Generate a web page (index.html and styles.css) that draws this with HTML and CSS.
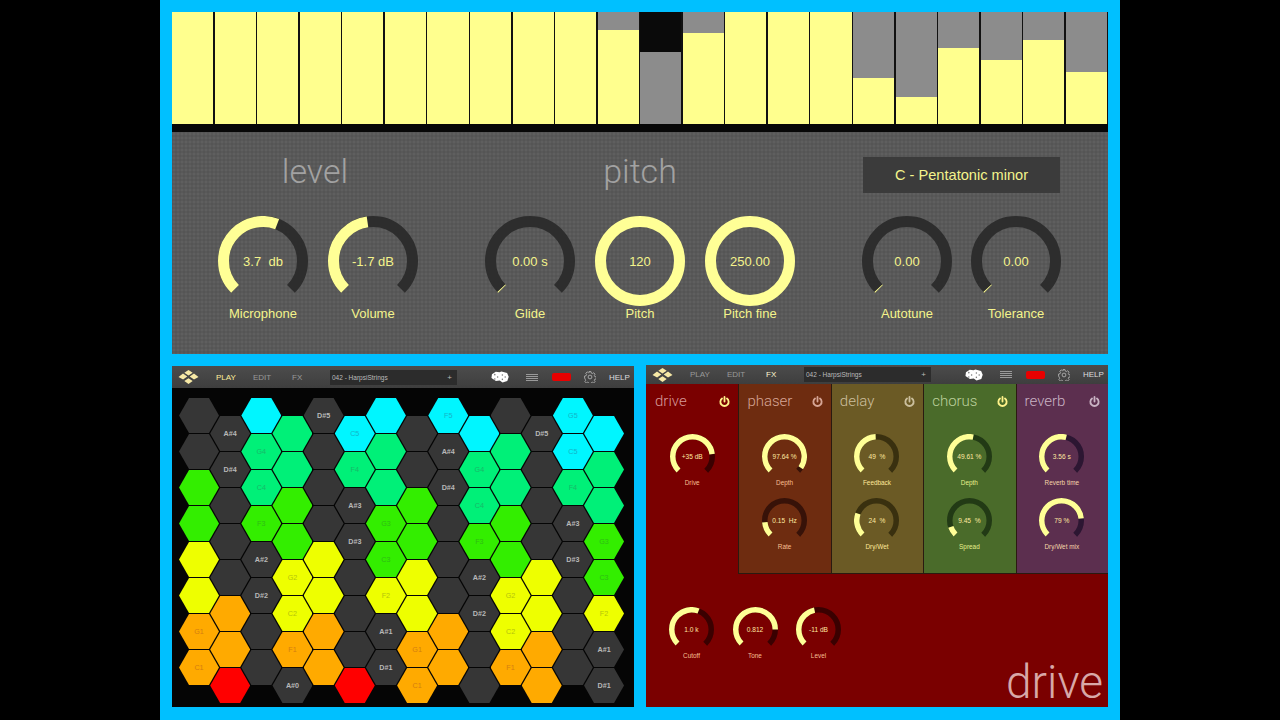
FILE: index.html
```html
<!DOCTYPE html>
<html lang="en">
<head>
    <meta charset="UTF-8">
    <title>Synth Controls</title>
    <link rel="stylesheet" href="styles.css">
</head>
<body>
    <svg class="sprites" aria-hidden="true">
        <symbol id="logo" viewBox="0 0 21 14">
            <path d="M10.5 0l4.2 2.8-4.2 2.8-4.2-2.8zM5 3.6l4.3 3-4.2 3L.5 7zM16 3.6L20.5 7 16 9.6l-4.3-3zM10.5 8.2l4.2 2.9-4.2 2.9-4.2-2.9z"/>
        </symbol>
        <symbol id="dice" viewBox="0 0 19 12">
            <path fill="#fff" d="M1 3l4-2.500 4 .5 2-.8 6 1.500 1.700 4-1.500 4.500-5 1.500-3-2-4 .5L.5 7z"/>
            <g fill="#777"><circle cx="4" cy="3.500" r=".8"/><circle cx="7" cy="6" r=".8"/><circle cx="4" cy="8" r=".8"/><circle cx="12" cy="4" r=".8"/><circle cx="15" cy="6" r=".8"/><circle cx="12" cy="8.500" r=".8"/></g>
        </symbol>
        <symbol id="gear" viewBox="0 0 12 12">
            <circle cx="6" cy="6" r="1.900" fill="none" stroke="#bbb" stroke-width=".8"/>
            <path fill="none" stroke="#bbb" stroke-width=".8" d="M5 .6h2l.3 1.500 1.100.5 1.300-.8 1.400 1.400-.8 1.300.5 1.100 1.500.3v2l-1.500.3-.5 1.100.8 1.300-1.400 1.400-1.300-.8-1.100.5-.3 1.500H5l-.3-1.500-1.100-.5-1.300.8-1.400-1.400.8-1.300-.5-1.100L.6 7V5l1.500-.3.5-1.100-.8-1.300 1.400-1.400 1.300.8 1.100-.5z"/>
        </symbol>
        <symbol id="power" viewBox="0 0 12 12">
            <path fill="none" stroke="currentColor" stroke-width="2" stroke-linecap="round" d="M3.300 2.800a4.500 4.500 0 1 0 5.400 0M6 1v5"/>
        </symbol>
    </svg>

    <div class="frame">
        <!-- Top: pitch bars and level controls -->
        <section class="tuner">
            <div class="bars">
                <div class="bar"><div class="fill" style="height:100%"></div></div>
                <div class="bar"><div class="fill" style="height:100%"></div></div>
                <div class="bar"><div class="fill" style="height:100%"></div></div>
                <div class="bar"><div class="fill" style="height:100%"></div></div>
                <div class="bar"><div class="fill" style="height:100%"></div></div>
                <div class="bar"><div class="fill" style="height:100%"></div></div>
                <div class="bar"><div class="fill" style="height:100%"></div></div>
                <div class="bar"><div class="fill" style="height:100%"></div></div>
                <div class="bar"><div class="fill" style="height:100%"></div></div>
                <div class="bar"><div class="fill" style="height:100%"></div></div>
                <div class="bar"><div class="fill" style="height:84%"></div></div>
                <div class="bar bar-muted"><div class="fill" style="height:64%"></div></div>
                <div class="bar"><div class="fill" style="height:81%"></div></div>
                <div class="bar"><div class="fill" style="height:100%"></div></div>
                <div class="bar"><div class="fill" style="height:100%"></div></div>
                <div class="bar"><div class="fill" style="height:100%"></div></div>
                <div class="bar"><div class="fill" style="height:41%"></div></div>
                <div class="bar"><div class="fill" style="height:24%"></div></div>
                <div class="bar"><div class="fill" style="height:68%"></div></div>
                <div class="bar"><div class="fill" style="height:57%"></div></div>
                <div class="bar"><div class="fill" style="height:75%"></div></div>
                <div class="bar"><div class="fill" style="height:46%"></div></div>
            </div>
            <div class="bars-base"></div>

            <div class="controls">
                <div class="group group-level">
                    <div class="group-head"><h2>level</h2></div>
                    <div class="knobs">
                        <div class="knob">
                            <div class="dial">
                                <svg viewBox="0 0 90 90"><circle class="track" cx="45" cy="45" r="39.500" pathLength="360" stroke-dasharray="270 360" transform="rotate(135 45 45)"/><circle class="value" cx="45" cy="45" r="39.500" pathLength="360" stroke-dasharray="156 360" transform="rotate(135 45 45)"/></svg>
                                <span class="readout">3.7  db</span>
                            </div>
                            <span class="label">Microphone</span>
                        </div>
                        <div class="knob">
                            <div class="dial">
                                <svg viewBox="0 0 90 90"><circle class="track" cx="45" cy="45" r="39.500" pathLength="360" stroke-dasharray="270 360" transform="rotate(135 45 45)"/><circle class="value" cx="45" cy="45" r="39.500" pathLength="360" stroke-dasharray="127 360" transform="rotate(135 45 45)"/></svg>
                                <span class="readout">-1.7 dB</span>
                            </div>
                            <span class="label">Volume</span>
                        </div>
                    </div>
                </div>

                <div class="group group-pitch">
                    <div class="group-head"><h2>pitch</h2></div>
                    <div class="knobs">
                        <div class="knob">
                            <div class="dial">
                                <svg viewBox="0 0 90 90"><circle class="track" cx="45" cy="45" r="39.500" pathLength="360" stroke-dasharray="270 360" transform="rotate(135 45 45)"/><circle class="value" cx="45" cy="45" r="39.500" pathLength="360" stroke-dasharray="1.500 360" transform="rotate(135 45 45)"/></svg>
                                <span class="readout">0.00 s</span>
                            </div>
                            <span class="label">Glide</span>
                        </div>
                        <div class="knob">
                            <div class="dial">
                                <svg viewBox="0 0 90 90"><circle class="value" cx="45" cy="45" r="39.500"/></svg>
                                <span class="readout">120</span>
                            </div>
                            <span class="label">Pitch</span>
                        </div>
                        <div class="knob">
                            <div class="dial">
                                <svg viewBox="0 0 90 90"><circle class="value" cx="45" cy="45" r="39.500"/></svg>
                                <span class="readout">250.00</span>
                            </div>
                            <span class="label">Pitch fine</span>
                        </div>
                    </div>
                </div>

                <div class="group group-scale">
                    <div class="group-head"><div class="scale-box">C - Pentatonic minor</div></div>
                    <div class="knobs">
                        <div class="knob">
                            <div class="dial">
                                <svg viewBox="0 0 90 90"><circle class="track" cx="45" cy="45" r="39.500" pathLength="360" stroke-dasharray="270 360" transform="rotate(135 45 45)"/><circle class="value" cx="45" cy="45" r="39.500" pathLength="360" stroke-dasharray="1.500 360" transform="rotate(135 45 45)"/></svg>
                                <span class="readout">0.00</span>
                            </div>
                            <span class="label">Autotune</span>
                        </div>
                        <div class="knob">
                            <div class="dial">
                                <svg viewBox="0 0 90 90"><circle class="track" cx="45" cy="45" r="39.500" pathLength="360" stroke-dasharray="270 360" transform="rotate(135 45 45)"/><circle class="value" cx="45" cy="45" r="39.500" pathLength="360" stroke-dasharray="1.500 360" transform="rotate(135 45 45)"/></svg>
                                <span class="readout">0.00</span>
                            </div>
                            <span class="label">Tolerance</span>
                        </div>
                    </div>
                </div>
            </div>
        </section>

        <div class="lower">
            <!-- Left: play grid -->
            <section class="app app-play">
                <header class="topbar">
                    <svg class="logo"><use href="#logo"/></svg>
                    <nav class="tabs">
                        <span class="tab tab-play active">PLAY</span>
                        <span class="tab tab-edit">EDIT</span>
                        <span class="tab tab-fx">FX</span>
                    </nav>
                    <div class="preset"><span>042 - HarpsiStrings</span><span class="preset-plus">+</span></div>
                    <svg class="dice"><use href="#dice"/></svg>
                    <div class="menu-lines"></div>
                    <div class="rec"></div>
                    <svg class="gear"><use href="#gear"/></svg>
                    <span class="help">HELP</span>
                </header>
                <div class="hex-grid">
                    <div class="hex-col">
                        <div class="hex dark"></div><div class="hex dark"></div><div class="hex green"></div><div class="hex green"></div>
                        <div class="hex yellow"></div><div class="hex yellow"></div><div class="hex orange">G1</div><div class="hex orange">C1</div>
                    </div>
                    <div class="hex-col">
                        <div class="hex dark">A#4</div><div class="hex dark">D#4</div><div class="hex dark"></div><div class="hex dark"></div>
                        <div class="hex dark"></div><div class="hex orange"></div><div class="hex orange"></div><div class="hex red"></div>
                    </div>
                    <div class="hex-col">
                        <div class="hex cyan"></div><div class="hex teal">G4</div><div class="hex teal">C4</div><div class="hex green">F3</div>
                        <div class="hex dark">A#2</div><div class="hex dark">D#2</div><div class="hex dark"></div><div class="hex dark"></div>
                    </div>
                    <div class="hex-col">
                        <div class="hex teal"></div><div class="hex teal"></div><div class="hex green"></div><div class="hex green"></div>
                        <div class="hex yellow">G2</div><div class="hex yellow">C2</div><div class="hex orange">F1</div><div class="hex dark">A#0</div>
                    </div>
                    <div class="hex-col">
                        <div class="hex dark">D#5</div><div class="hex dark"></div><div class="hex dark"></div><div class="hex dark"></div>
                        <div class="hex yellow"></div><div class="hex yellow"></div><div class="hex orange"></div><div class="hex orange"></div>
                    </div>
                    <div class="hex-col">
                        <div class="hex cyan">C5</div><div class="hex teal">F4</div><div class="hex dark">A#3</div><div class="hex dark">D#3</div>
                        <div class="hex dark"></div><div class="hex dark"></div><div class="hex dark"></div><div class="hex red"></div>
                    </div>
                    <div class="hex-col">
                        <div class="hex cyan"></div><div class="hex teal"></div><div class="hex teal"></div><div class="hex green">G3</div>
                        <div class="hex green">C3</div><div class="hex yellow">F2</div><div class="hex dark">A#1</div><div class="hex dark">D#1</div>
                    </div>
                    <div class="hex-col">
                        <div class="hex dark"></div><div class="hex dark"></div><div class="hex green"></div><div class="hex green"></div>
                        <div class="hex yellow"></div><div class="hex yellow"></div><div class="hex orange">G1</div><div class="hex orange">C1</div>
                    </div>
                    <div class="hex-col">
                        <div class="hex cyan">F5</div><div class="hex dark">A#4</div><div class="hex dark">D#4</div><div class="hex dark"></div>
                        <div class="hex dark"></div><div class="hex dark"></div><div class="hex orange"></div><div class="hex orange"></div>
                    </div>
                    <div class="hex-col">
                        <div class="hex cyan"></div><div class="hex teal">G4</div><div class="hex teal">C4</div><div class="hex green">F3</div>
                        <div class="hex dark">A#2</div><div class="hex dark">D#2</div><div class="hex dark"></div><div class="hex dark"></div>
                    </div>
                    <div class="hex-col">
                        <div class="hex dark"></div><div class="hex teal"></div><div class="hex teal"></div><div class="hex green"></div>
                        <div class="hex green"></div><div class="hex yellow">G2</div><div class="hex yellow">C2</div><div class="hex orange">F1</div>
                    </div>
                    <div class="hex-col">
                        <div class="hex dark">D#5</div><div class="hex dark"></div><div class="hex dark"></div><div class="hex dark"></div>
                        <div class="hex yellow"></div><div class="hex yellow"></div><div class="hex orange"></div><div class="hex orange"></div>
                    </div>
                    <div class="hex-col">
                        <div class="hex cyan">G5</div><div class="hex cyan">C5</div><div class="hex teal">F4</div><div class="hex dark">A#3</div>
                        <div class="hex dark">D#3</div><div class="hex dark"></div><div class="hex dark"></div><div class="hex dark"></div>
                    </div>
                    <div class="hex-col">
                        <div class="hex cyan"></div><div class="hex teal"></div><div class="hex teal"></div><div class="hex green">G3</div>
                        <div class="hex green">C3</div><div class="hex yellow">F2</div><div class="hex dark">A#1</div><div class="hex dark">D#1</div>
                    </div>
                </div>
            </section>

            <!-- Right: effects rack -->
            <section class="app app-fx">
                <header class="topbar">
                    <svg class="logo"><use href="#logo"/></svg>
                    <nav class="tabs">
                        <span class="tab tab-play">PLAY</span>
                        <span class="tab tab-edit">EDIT</span>
                        <span class="tab tab-fx active">FX</span>
                    </nav>
                    <div class="preset"><span>042 - HarpsiStrings</span><span class="preset-plus">+</span></div>
                    <svg class="dice"><use href="#dice"/></svg>
                    <div class="menu-lines"></div>
                    <div class="rec"></div>
                    <svg class="gear"><use href="#gear"/></svg>
                    <span class="help">HELP</span>
                </header>
                <div class="fx-body">
                    <div class="fx-row">
                        <div class="fx-col fx-drive">
                            <div class="fx-head"><h3>drive</h3><svg class="power power-on"><use href="#power"/></svg></div>
                            <div class="knob knob-small">
                                <div class="dial">
                                    <svg viewBox="0 0 90 90"><circle class="track" cx="45" cy="45" r="39.500" pathLength="360" stroke-dasharray="270 360" transform="rotate(135 45 45)"/><circle class="value" cx="45" cy="45" r="39.500" pathLength="360" stroke-dasharray="217 360" transform="rotate(135 45 45)"/></svg>
                                    <span class="readout">+35 dB</span>
                                </div>
                                <span class="label">Drive</span>
                            </div>
                        </div>
                        <div class="fx-col fx-phaser">
                            <div class="fx-head"><h3>phaser</h3><svg class="power"><use href="#power"/></svg></div>
                            <div class="knob knob-small">
                                <div class="dial">
                                    <svg viewBox="0 0 90 90"><circle class="track" cx="45" cy="45" r="39.500" pathLength="360" stroke-dasharray="270 360" transform="rotate(135 45 45)"/><circle class="value" cx="45" cy="45" r="39.500" pathLength="360" stroke-dasharray="258 360" transform="rotate(135 45 45)"/></svg>
                                    <span class="readout">97.64 %</span>
                                </div>
                                <span class="label">Depth</span>
                            </div>
                            <div class="knob knob-small">
                                <div class="dial">
                                    <svg viewBox="0 0 90 90"><circle class="track" cx="45" cy="45" r="39.500" pathLength="360" stroke-dasharray="270 360" transform="rotate(135 45 45)"/><circle class="value" cx="45" cy="45" r="39.500" pathLength="360" stroke-dasharray="40 360" transform="rotate(135 45 45)"/></svg>
                                    <span class="readout">0.15  Hz</span>
                                </div>
                                <span class="label">Rate</span>
                            </div>
                        </div>
                        <div class="fx-col fx-delay">
                            <div class="fx-head"><h3>delay</h3><svg class="power"><use href="#power"/></svg></div>
                            <div class="knob knob-small">
                                <div class="dial">
                                    <svg viewBox="0 0 90 90"><circle class="track" cx="45" cy="45" r="39.500" pathLength="360" stroke-dasharray="270 360" transform="rotate(135 45 45)"/><circle class="value" cx="45" cy="45" r="39.500" pathLength="360" stroke-dasharray="132 360" transform="rotate(135 45 45)"/></svg>
                                    <span class="readout">49  %</span>
                                </div>
                                <span class="label">Feedback</span>
                            </div>
                            <div class="knob knob-small">
                                <div class="dial">
                                    <svg viewBox="0 0 90 90"><circle class="track" cx="45" cy="45" r="39.500" pathLength="360" stroke-dasharray="270 360" transform="rotate(135 45 45)"/><circle class="value" cx="45" cy="45" r="39.500" pathLength="360" stroke-dasharray="65 360" transform="rotate(135 45 45)"/></svg>
                                    <span class="readout">24  %</span>
                                </div>
                                <span class="label">Dry/Wet</span>
                            </div>
                        </div>
                        <div class="fx-col fx-chorus">
                            <div class="fx-head"><h3>chorus</h3><svg class="power power-on"><use href="#power"/></svg></div>
                            <div class="knob knob-small">
                                <div class="dial">
                                    <svg viewBox="0 0 90 90"><circle class="track" cx="45" cy="45" r="39.500" pathLength="360" stroke-dasharray="270 360" transform="rotate(135 45 45)"/><circle class="value" cx="45" cy="45" r="39.500" pathLength="360" stroke-dasharray="145 360" transform="rotate(135 45 45)"/></svg>
                                    <span class="readout">49.61 %</span>
                                </div>
                                <span class="label">Depth</span>
                            </div>
                            <div class="knob knob-small">
                                <div class="dial">
                                    <svg viewBox="0 0 90 90"><circle class="track" cx="45" cy="45" r="39.500" pathLength="360" stroke-dasharray="270 360" transform="rotate(135 45 45)"/><circle class="value" cx="45" cy="45" r="39.500" pathLength="360" stroke-dasharray="26 360" transform="rotate(135 45 45)"/></svg>
                                    <span class="readout">9.45  %</span>
                                </div>
                                <span class="label">Spread</span>
                            </div>
                        </div>
                        <div class="fx-col fx-reverb">
                            <div class="fx-head"><h3>reverb</h3><svg class="power"><use href="#power"/></svg></div>
                            <div class="knob knob-small">
                                <div class="dial">
                                    <svg viewBox="0 0 90 90"><circle class="track" cx="45" cy="45" r="39.500" pathLength="360" stroke-dasharray="270 360" transform="rotate(135 45 45)"/><circle class="value" cx="45" cy="45" r="39.500" pathLength="360" stroke-dasharray="148 360" transform="rotate(135 45 45)"/></svg>
                                    <span class="readout">3.56 s</span>
                                </div>
                                <span class="label">Reverb time</span>
                            </div>
                            <div class="knob knob-small">
                                <div class="dial">
                                    <svg viewBox="0 0 90 90"><circle class="track" cx="45" cy="45" r="39.500" pathLength="360" stroke-dasharray="270 360" transform="rotate(135 45 45)"/><circle class="value" cx="45" cy="45" r="39.500" pathLength="360" stroke-dasharray="218 360" transform="rotate(135 45 45)"/></svg>
                                    <span class="readout">79 %</span>
                                </div>
                                <span class="label">Dry/Wet mix</span>
                            </div>
                        </div>
                    </div>
                    <div class="fx-master">
                        <div class="master-knobs">
                            <div class="knob knob-small">
                                <div class="dial">
                                    <svg viewBox="0 0 90 90"><circle class="track" cx="45" cy="45" r="39.500" pathLength="360" stroke-dasharray="270 360" transform="rotate(135 45 45)"/><circle class="value" cx="45" cy="45" r="39.500" pathLength="360" stroke-dasharray="155 360" transform="rotate(135 45 45)"/></svg>
                                    <span class="readout">1.0 k</span>
                                </div>
                                <span class="label">Cutoff</span>
                            </div>
                            <div class="knob knob-small">
                                <div class="dial">
                                    <svg viewBox="0 0 90 90"><circle class="track" cx="45" cy="45" r="39.500" pathLength="360" stroke-dasharray="270 360" transform="rotate(135 45 45)"/><circle class="value" cx="45" cy="45" r="39.500" pathLength="360" stroke-dasharray="224 360" transform="rotate(135 45 45)"/></svg>
                                    <span class="readout">0.812</span>
                                </div>
                                <span class="label">Tone</span>
                            </div>
                            <div class="knob knob-small">
                                <div class="dial">
                                    <svg viewBox="0 0 90 90"><circle class="track" cx="45" cy="45" r="39.500" pathLength="360" stroke-dasharray="270 360" transform="rotate(135 45 45)"/><circle class="value" cx="45" cy="45" r="39.500" pathLength="360" stroke-dasharray="123 360" transform="rotate(135 45 45)"/></svg>
                                    <span class="readout">-11 dB</span>
                                </div>
                                <span class="label">Level</span>
                            </div>
                        </div>
                        <div class="fx-name">drive</div>
                    </div>
                </div>
            </section>
        </div>
    </div>
</body>
</html>
```

FILE: styles.css
```css
/* General */
* {
    box-sizing: border-box;
}

body {
    margin: 0;
    height: 720px;
    overflow: hidden;
    display: flex;
    justify-content: center;
    background-color: #000;
    font-family: "Liberation Sans", Arial, sans-serif;
}

.sprites {
    display: none;
}

.frame {
    width: 960px;
    height: 720px;
    padding: 12px 12px 13px;
    display: flex;
    flex-direction: column;
    gap: 11px;
    background-color: #00c0ff;
}

/* Top panel */
.tuner {
    height: 342px;
    display: flex;
    flex-direction: column;
}

.bars {
    height: 112px;
    display: flex;
    gap: 1.4px;
    padding-right: 1px;
    background-color: #111;
}

.bar {
    flex: 1;
    display: flex;
    align-items: flex-end;
    background-color: #8c8c8c;
}

.fill {
    width: 100%;
    background-color: #ffff8e;
}

.bar-muted {
    background-color: #0a0a0a;
}

.bar-muted .fill {
    background-color: #8c8c8c;
}

.bars-base {
    height: 8px;
    background-color: #080808;
}

.controls {
    flex: 1;
    display: flex;
    justify-content: space-between;
    padding: 0 47px 0 46px;
    background-color: #595959;
    background-image:
        radial-gradient(circle, rgba(255, 255, 255, 0.035) 1px, transparent 1.5px),
        radial-gradient(circle, rgba(0, 0, 0, 0.045) 1px, transparent 1.5px);
    background-size: 4px 4px;
    background-position: 0 0, 2px 2px;
}

.group-level {
    width: 200px;
}

.group-pitch {
    width: 310px;
}

.group-scale {
    width: 199px;
}

.group-head {
    height: 84px;
    display: flex;
    justify-content: center;
}

.group-level .group-head {
    padding-right: 6px;
}

.group-head h2 {
    margin: 18px 0 0;
    font-family: Roboto, sans-serif;
    font-size: 34px;
    font-weight: 300;
    line-height: 42px;
    color: #a2a2a2;
}

.scale-box {
    width: 197px;
    height: 36px;
    margin-top: 25px;
    display: flex;
    align-items: center;
    justify-content: center;
    font-size: 14.6px;
    color: #f4f48c;
    background-color: #3b3b3b;
}

.knobs {
    display: flex;
    justify-content: space-between;
}

/* Knobs */
.knob {
    display: flex;
    flex-direction: column;
    align-items: center;
    color: #f4f48c;
}

.dial {
    width: 90px;
    height: 90px;
    display: grid;
    place-items: center;
}

.dial svg {
    grid-area: 1 / 1;
    width: 100%;
    height: 100%;
}

.readout {
    grid-area: 1 / 1;
    font-size: 13px;
    white-space: pre;
}

.label {
    font-size: 13px;
    line-height: 15px;
}

.track,
.value {
    fill: none;
    stroke-width: 11;
}

.track {
    stroke: #2d2d2d;
}

.value {
    stroke: #ffff96;
}

.knob-small .dial {
    width: 45px;
    height: 45px;
}

.knob-small .readout {
    font-size: 6.6px;
    color: #ffe8a0;
}

.knob-small .label {
    margin-top: -1.5px;
    font-size: 6.4px;
    line-height: 9px;
    color: #f8bf92;
}

/* Lower apps */
.lower {
    flex: 1;
    display: flex;
    align-items: flex-end;
    gap: 12px;
}

.app {
    width: 462px;
    display: flex;
    flex-direction: column;
}

.app-play {
    height: 341px;
}

.app-fx {
    height: 342px;
}

.topbar {
    display: flex;
    align-items: center;
    flex-shrink: 0;
    background: linear-gradient(#4c4c4c, #3e3e3e);
    font-size: 8px;
    color: #999;
}

.app-play .topbar {
    height: 22px;
    padding-left: 6px;
}

.app-fx .topbar {
    height: 19px;
    padding-left: 6px;
}

.logo {
    width: 21px;
    height: 14px;
    fill: #f7e9a6;
}

.tabs {
    display: flex;
    margin-left: 17px;
    width: 114px;
}

.tab-edit {
    margin-left: 17px;
}

.tab-fx {
    margin-left: 21px;
}

.active {
    color: #ffef9c;
}

.app-fx .active {
    color: #fff8d0;
}

.preset {
    width: 127px;
    height: 15px;
    display: flex;
    align-items: center;
    justify-content: space-between;
    padding: 0 5px 0 2px;
    font-size: 6.5px;
    color: #bbb;
    background-color: #2c2c2c;
}

.preset-plus {
    font-size: 8px;
}

.dice {
    width: 18px;
    height: 12px;
    margin-left: 34px;
}

.menu-lines {
    width: 12px;
    height: 7px;
    margin-left: 17px;
    background: repeating-linear-gradient(#9a9a9a 0, #9a9a9a 1px, transparent 1px, transparent 2px);
}

.rec {
    width: 19px;
    height: 8px;
    margin-left: 14px;
    border-radius: 2px;
    background-color: #e80000;
}

.gear {
    width: 12px;
    height: 12px;
    margin-left: 13px;
}

.help {
    margin-left: 13px;
    color: #ddd;
}

/* Hex grid */
.hex-grid {
    flex: 1;
    display: flex;
    padding: 10px 0 0 7px;
    background-color: #050505;
}

.hex-col {
    width: 40px;
    margin-right: -8.85px;
    flex-shrink: 0;
}

.hex-col:nth-child(even) {
    padding-top: 18px;
}

.hex {
    width: 40px;
    height: 35px;
    margin-bottom: 1px;
    display: flex;
    align-items: center;
    justify-content: center;
    font-size: 7.2px;
    clip-path: polygon(25% 0, 75% 0, 100% 50%, 75% 100%, 25% 100%, 0 50%);
}

.dark {
    background-color: #363636;
    color: #b8b8b8;
    font-weight: bold;
}

.cyan {
    background-color: #00f6ff;
    color: #14b4c8;
}

.teal {
    background-color: #00f078;
    color: #18b868;
}

.green {
    background-color: #33ee00;
    color: #2ebc14;
}

.yellow {
    background-color: #eeff00;
    color: #b4c40c;
}

.orange {
    background-color: #ffaa00;
    color: #d47e10;
}

.red {
    background-color: #ff0000;
}

/* FX rack */
.fx-body {
    flex: 1;
    display: flex;
    flex-direction: column;
    background-color: #7a0000;
}

.fx-row {
    height: 190px;
    display: grid;
    grid-template-columns: repeat(5, 1fr);
}

.fx-col {
    display: flex;
    flex-direction: column;
    align-items: center;
    box-shadow: inset 1px 0 #2a1a10, inset 0 -1px #2a1a10;
}

.fx-col .knob {
    margin-top: 11.5px;
}

.fx-col .fx-head + .knob {
    margin-top: 24px;
}

.fx-head {
    width: 100%;
    height: 26px;
    display: flex;
    align-items: center;
    justify-content: space-between;
    padding: 8px 8px 0 9px;
}

.fx-head h3 {
    margin: 0;
    font-family: Roboto, sans-serif;
    font-size: 15px;
    font-weight: 300;
}

.power {
    width: 11px;
    height: 11px;
}

.power-on {
    color: #fff28a;
}

.fx-drive {
    background-color: #7a0000;
    box-shadow: none;
    color: #d69a9a;
}

.fx-drive .track {
    stroke: #3a0000;
}

.fx-phaser {
    background-color: #6e2c10;
    color: #d6a595;
}

.fx-phaser .track {
    stroke: #371208;
}

.fx-delay {
    background-color: #6b5a25;
    color: #cbbf9d;
}

.fx-delay .track {
    stroke: #39300f;
}

.fx-delay .label {
    color: #ffe89a;
}

.fx-chorus {
    background-color: #4a6b2a;
    color: #bcd09c;
}

.fx-chorus .track {
    stroke: #223a15;
}

.fx-chorus .label {
    color: #e6f08c;
}

.fx-reverb {
    background-color: #5c2f4f;
    color: #c9b3c4;
}

.fx-reverb .track {
    stroke: #2c1632;
}

.fx-reverb .label {
    color: #f5d5a8;
}

.fx-master {
    flex: 1;
    display: flex;
    justify-content: space-between;
    align-items: flex-end;
    padding: 33px 5px 0 23px;
}

.master-knobs {
    align-self: flex-start;
    display: flex;
    gap: 18.5px;
}

.master-knobs .track {
    stroke: #3a0000;
}

.fx-name {
    font-family: Roboto, sans-serif;
    font-size: 46px;
    font-weight: 300;
    line-height: 50px;
    color: #d8a8a8;
}
```
